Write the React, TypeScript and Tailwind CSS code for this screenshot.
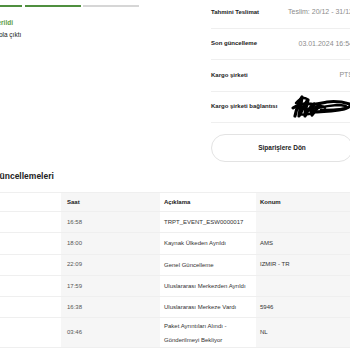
import React from 'react';

const updates = [
  { date: '04.01.2024', time: '16:58', desc: ['TRPT_EVENT_ESW0000017'], loc: '' },
  { date: '03.01.2024', time: '18:00', desc: ['Kaynak Ülkeden Ayrıldı'], loc: 'AMS' },
  { date: '02.01.2024', time: '22:09', desc: ['Genel Güncelleme'], loc: 'IZMIR - TR' },
  { date: '02.01.2024', time: '17:59', desc: ['Uluslararası Merkezden Ayrıldı'], loc: '' },
  { date: '29.12.2023', time: '16:38', desc: ['Uluslararası Merkeze Vardı'], loc: '5946' },
  { date: '28.12.2023', time: '03:46', desc: ['Paket Ayrıntıları Alındı -', 'Gönderilmeyi Bekliyor'], loc: 'NL' },
];

const infoRows = [
  { label: 'Tahmini Teslimat', value: 'Teslim: 20/12 - 31/12' },
  { label: 'Son güncelleme', value: '03.01.2024 16:54' },
  { label: 'Kargo şirketi', value: 'PTS' },
];

function Scribble() {
  return (
    <svg width="62" height="24" viewBox="0 0 62 24" className="shrink-0">
      <g fill="none" stroke="#000" strokeLinecap="round" strokeLinejoin="round">
        <path d="M4 21 C6 12 8 6 11 2 C10 9 9 15 8 21 C12 14 14 8 17 5 C15 12 14 17 14 21 C17 15 20 11 23 9 C21 14 20 18 21 20 C24 16 26 13 29 11" strokeWidth="3.2" />
        <path d="M2 13 C8 9 14 8 20 9 C26 10 30 8 36 7 C44 6 52 7 59 9 C61 11 56 14 48 15 C40 16 30 17 20 17" strokeWidth="3" />
        <path d="M16 16 C26 12 36 11 46 10 C52 10 57 11 55 13 C50 15 40 15 30 15" strokeWidth="2.6" />
        <path d="M5 8 C9 3 13 2 16 4 M8 19 C13 20 17 20 22 18 M24 12 C28 10 32 11 34 13" strokeWidth="2.4" />
      </g>
    </svg>
  );
}

export default function App() {
  return (
    <div className="w-[350px] h-[350px] overflow-hidden bg-white font-['Liberation_Sans',Arial,sans-serif] text-[#222]">
      <div className="ml-[-34px] w-[400px]">
        {/* top area */}
        <div className="flex pr-[13px]">
          <div className="flex-1">
            <div className="mt-[5px] flex gap-[2.5px] w-[173px]">
              <div className="h-[1.5px] flex-1 bg-[#4f8f3f]" />
              <div className="h-[1.5px] flex-1 bg-[#4f8f3f]" />
              <div className="h-[1.5px] flex-1 bg-[#d6d6d6]" />
            </div>
            <div className="mt-[11px] text-[6.5px] leading-[10px] font-bold text-[#5c9c3e]">Kargoya verildi</div>
            <div className="mt-[2px] text-[6.5px] leading-[10px] text-[#222]">Kargonuz yola çıktı</div>
          </div>
          <div className="w-[142px] ml-[11px] mt-[-3px]">
            {infoRows.map((r) => (
              <div key={r.label} className="h-[31.5px] flex items-center justify-between border-b border-[#efefef]">
                <span className="text-[6px] font-bold">{r.label}</span>
                <span className="text-[7px] text-[#8c8c8c] whitespace-nowrap">{r.value}</span>
              </div>
            ))}
            <div className="h-[31.5px] flex items-center justify-between border-b border-[#efefef]">
              <span className="text-[6px] font-bold">Kargo şirketi bağlantısı</span>
              <Scribble />
            </div>
            <button className="mt-[11px] w-full h-[28px] rounded-full border border-[#e3e3e3] bg-white text-[6.5px] font-bold text-[#222]">
              Siparişlere Dön
            </button>
          </div>
        </div>

        {/* updates */}
        <div className="mt-[8px] text-[8.5px] leading-[12px] font-bold">Kargo Güncellemeleri</div>
        <div className="mt-[10px] text-[6px]">
          <div className="grid grid-cols-[95px_99px_96px_1fr] h-[20px] border-y border-[#efefef]">
            <div className="flex items-center pl-[2px] font-bold">Tarih</div>
            <div className="flex items-center pl-[6px] font-bold bg-[#f6f6f6]">Saat</div>
            <div className="flex items-center pl-[4px] font-bold">Açıklama</div>
            <div className="flex items-center pl-[4px] font-bold bg-[#f6f6f6]">Konum</div>
          </div>
          {updates.map((u, i) => (
            <div
              key={i}
              className={`grid grid-cols-[95px_99px_96px_1fr] border-b border-[#efefef] ${u.desc.length > 1 ? 'h-[30px]' : 'h-[21.3px]'}`}
            >
              <div className="flex items-center pl-[2px] text-[#555]">{u.date}</div>
              <div className="flex items-center pl-[6px] bg-[#f6f6f6] text-[#555]">{u.time}</div>
              <div className="flex flex-col justify-center pl-[4px] leading-[14px] text-[#333]">
                {u.desc.map((d) => (
                  <span key={d}>{d}</span>
                ))}
              </div>
              <div className="flex items-center pl-[4px] bg-[#f6f6f6] text-[#333]">{u.loc}</div>
            </div>
          ))}
        </div>
      </div>
    </div>
  );
}
